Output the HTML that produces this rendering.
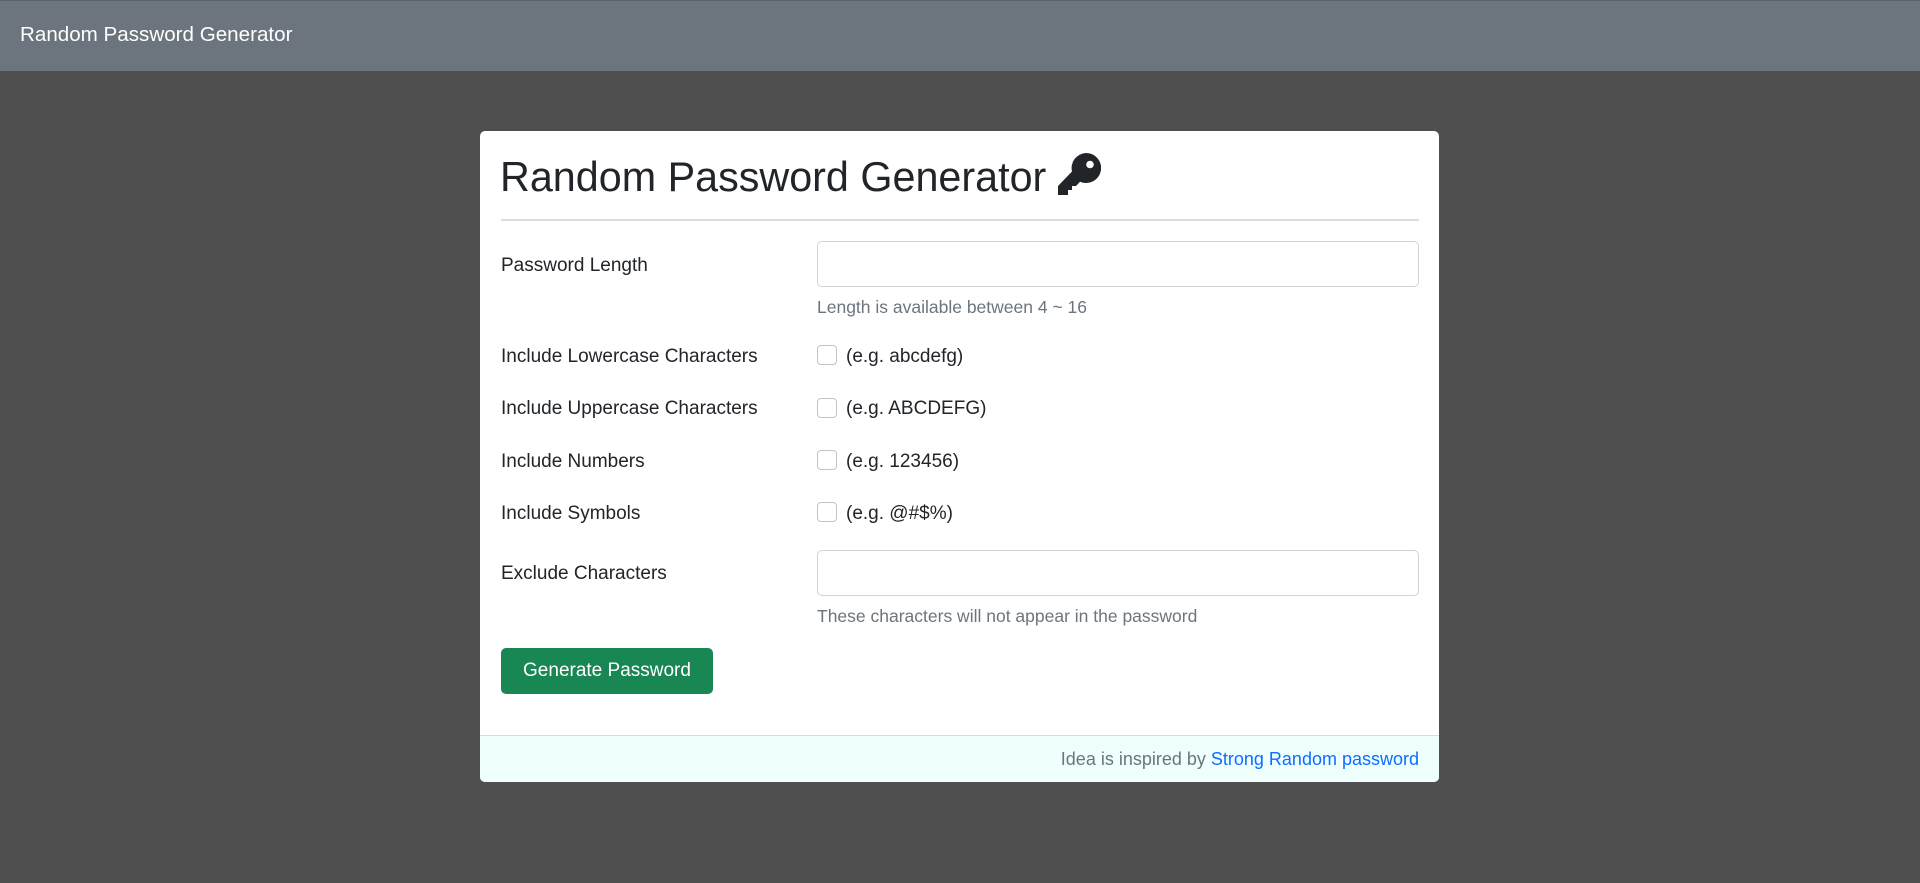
<!DOCTYPE html>
<html><head><meta charset="utf-8"><style>
*{box-sizing:border-box;margin:0;padding:0}
body{width:1920px;height:883px;background:#4f4f4f;font-family:"Liberation Sans",sans-serif;position:relative;overflow:hidden;color:#212529}
.nav{position:absolute;left:0;top:0;width:1920px;height:71px;background:#6c757d;border-top:1px solid #5a6168}
.nav span{position:absolute;left:20px;top:22px;font-size:20.6px;color:#fff}
.card{position:absolute;left:480px;top:131px;width:959px;height:651px;background:#fff;border-radius:5px;overflow:hidden}
.t{position:absolute;font-size:19px;line-height:22px}
h1{position:absolute;left:500px;top:151px;font-size:41.3px;font-weight:400;line-height:52px;color:#212529}
.hr{position:absolute;left:501px;top:219px;width:918px;height:2px;background:#dcdcdc}
.inp{position:absolute;left:817px;width:602px;height:46px;border:1px solid #ced4da;border-radius:5px;background:#fff}
.help{color:#6c757d;font-size:17.5px}
.cb{position:absolute;left:817px;width:20px;height:20px;border:1px solid #bfc4c8;border-radius:4px;background:#fff}
.btn{position:absolute;left:501px;top:648px;width:212px;height:46px;background:#198754;border-radius:5px;color:#fff;font-size:19px;line-height:46px;text-align:center}
.foot{position:absolute;left:480px;top:735px;width:959px;height:47px;background:#effffe;border-top:1px solid #dcdcdc;border-radius:0 0 5px 5px}
</style></head><body>
<div class="nav"><span>Random Password Generator</span></div>
<div class="card"></div>
<h1>Random Password Generator</h1>
<svg style="position:absolute;left:1057px;top:153px" width="44" height="44" viewBox="0 0 44 44">
<path d="M29 0a15 15 0 1 1-6 28.7L19 33h-4v4h-4v5H1v-9l14-14.5A15 15 0 0 1 29 0z" fill="#212529"/>
<circle cx="33" cy="11.5" r="3.8" fill="#fff"/></svg>
<div class="hr"></div>
<div class="t" style="left:501px;top:255px">Password Length</div>
<div class="inp" style="top:241px"></div>
<div class="t help" style="left:817px;top:296px">Length is available between 4 ~ 16</div>
<div class="t" style="left:501px;top:346px">Include Lowercase Characters</div>
<div class="cb" style="top:345px"></div><div class="t" style="left:846px;top:346px">(e.g. abcdefg)</div>
<div class="t" style="left:501px;top:398px">Include Uppercase Characters</div>
<div class="cb" style="top:398px"></div><div class="t" style="left:846px;top:398px">(e.g. ABCDEFG)</div>
<div class="t" style="left:501px;top:451px">Include Numbers</div>
<div class="cb" style="top:450px"></div><div class="t" style="left:846px;top:451px">(e.g. 123456)</div>
<div class="t" style="left:501px;top:503px">Include Symbols</div>
<div class="cb" style="top:502px"></div><div class="t" style="left:846px;top:503px">(e.g. @#$%)</div>
<div class="t" style="left:501px;top:563px">Exclude Characters</div>
<div class="inp" style="top:550px"></div>
<div class="t help" style="left:817px;top:605px">These characters will not appear in the password</div>
<div class="btn">Generate Password</div>
<div class="foot"></div>
<div class="t" style="right:501px;top:748px;font-size:18px;color:#6c757d">Idea is inspired by <span style="color:#0d6efd">Strong Random password</span></div>
</body></html>
